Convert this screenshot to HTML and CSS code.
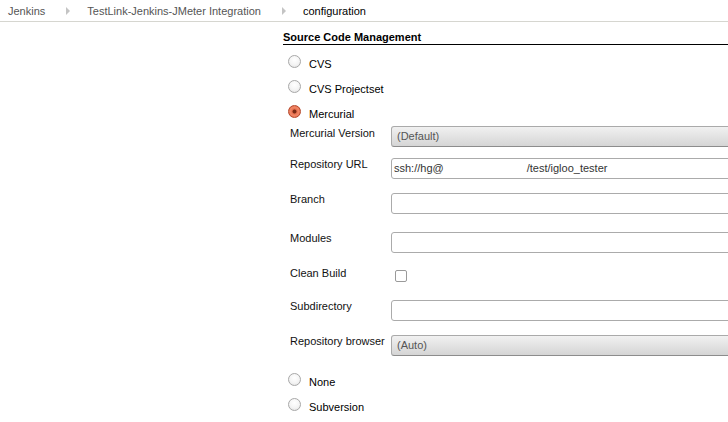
FILE: index.html
```html
<!DOCTYPE html>
<html>
<head>
<meta charset="utf-8">
<link rel="stylesheet" href="styles.css">
</head>
<body>
<div class="crumbs">
  <span class="crumb">Jenkins</span><span class="sep"></span>
  <span class="crumb">TestLink-Jenkins-JMeter Integration</span><span class="sep"></span>
  <span class="crumb current">configuration</span>
</div>
<div class="main">
  <div class="side"></div>
  <div class="content">
    <div class="section-head">Source Code Management</div>
    <div class="radios">
      <div class="radio-row"><span class="radio"></span><span>CVS</span></div>
      <div class="radio-row"><span class="radio"></span><span>CVS Projectset</span></div>
      <div class="radio-row"><span class="radio checked"></span><span>Mercurial</span></div>
    </div>
    <div class="fields">
      <div class="field h32"><div class="label first">Mercurial Version</div><div class="control"><div class="select">(Default)</div></div></div>
      <div class="field h35"><div class="label">Repository URL</div><div class="control"><div class="input"><span>ssh://hg@</span><span class="path">/test/igloo_tester</span></div></div></div>
      <div class="field h39"><div class="label">Branch</div><div class="control"><div class="input"></div></div></div>
      <div class="field h35"><div class="label">Modules</div><div class="control"><div class="input"></div></div></div>
      <div class="field h33"><div class="label">Clean Build</div><div class="control"><span class="checkbox"></span></div></div>
      <div class="field h35"><div class="label">Subdirectory</div><div class="control"><div class="input"></div></div></div>
      <div class="field h34"><div class="label">Repository browser</div><div class="control"><div class="select">(Auto)</div></div></div>
    </div>
    <div class="radios">
      <div class="radio-row"><span class="radio"></span><span>None</span></div>
      <div class="radio-row"><span class="radio"></span><span>Subversion</span></div>
    </div>
  </div>
</div>
</body>
</html>
```
FILE: styles.css
```css
html, body {
  margin: 0;
  padding: 0;
  background: #fff;
  overflow: hidden;
}
body {
  font-family: "Liberation Sans", Arial, sans-serif;
  font-size: 11px;
  color: #222;
  width: 728px;
  height: 422px;
}
.crumbs {
  height: 21px;
  border-bottom: 1px solid #d6d6d0;
  display: flex;
  align-items: center;
  padding-left: 8px;
  line-height: 22px;
}
.crumb {
  color: #555;
}
.crumb.current {
  color: #000;
}
.sep {
  width: 0;
  height: 0;
  border-left: 4px solid #c4c4c4;
  border-top: 4px solid transparent;
  border-bottom: 4px solid transparent;
  margin: 0 17px 0 21px;
}
.main {
  display: flex;
}
.side {
  width: 283px;
  flex: none;
}
.content {
  width: 480px;
  flex: none;
}
.section-head {
  font-weight: bold;
  color: #000;
  margin-top: 8px;
  line-height: 14px;
  border-bottom: 1px solid #000;
  margin-bottom: 6px;
}
.radio-row {
  height: 25px;
  display: flex;
  align-items: center;
  padding-left: 5px;
  color: #000;
}
.radio {
  width: 11px;
  height: 11px;
  border-radius: 50%;
  border: 1px solid #a8a8a8;
  background: radial-gradient(circle at 50% 35%, #ffffff 0%, #f4f4f4 55%, #dedede 100%);
  margin-right: 8px;
  position: relative;
  top: -2px;
  box-sizing: content-box;
}
.radio.checked {
  border-color: #b5472a;
  background: radial-gradient(circle at 50% 50%, #7a2a15 0, #7a2a15 1.6px, #e8704f 2.4px, #f08766 55%, #d9573a 100%);
}
.field {
  display: flex;
  align-items: flex-start;
}
.h32 { height: 32px; }
.h33 { height: 33px; }
.h34 { height: 34px; }
.h35 { height: 35px; }
.h39 { height: 39px; }
.label {
  width: 101px;
  padding-left: 7px;
  flex: none;
  line-height: 13px;
  color: #111;
}
.label.first {
  padding-top: 1px;
}
.control {
  flex: 1;
}
.select {
  height: 19px;
  line-height: 19px;
  border: 1px solid #aaa;
  border-bottom-color: #8c8c8c;
  border-radius: 3px;
  background: linear-gradient(#f1f1f1, #d5d5d5);
  padding-left: 5px;
  color: #555;
}
.input {
  height: 19px;
  line-height: 19px;
  border: 1px solid #ababab;
  border-radius: 3px;
  background: #fff;
  padding-left: 2px;
  color: #333;
}
.path {
  margin-left: 83px;
}
.checkbox {
  display: block;
  width: 10px;
  height: 10px;
  border: 1px solid #9a9a9a;
  border-radius: 2px;
  background: #fff;
  margin: 3px 0 0 4px;
}
```
